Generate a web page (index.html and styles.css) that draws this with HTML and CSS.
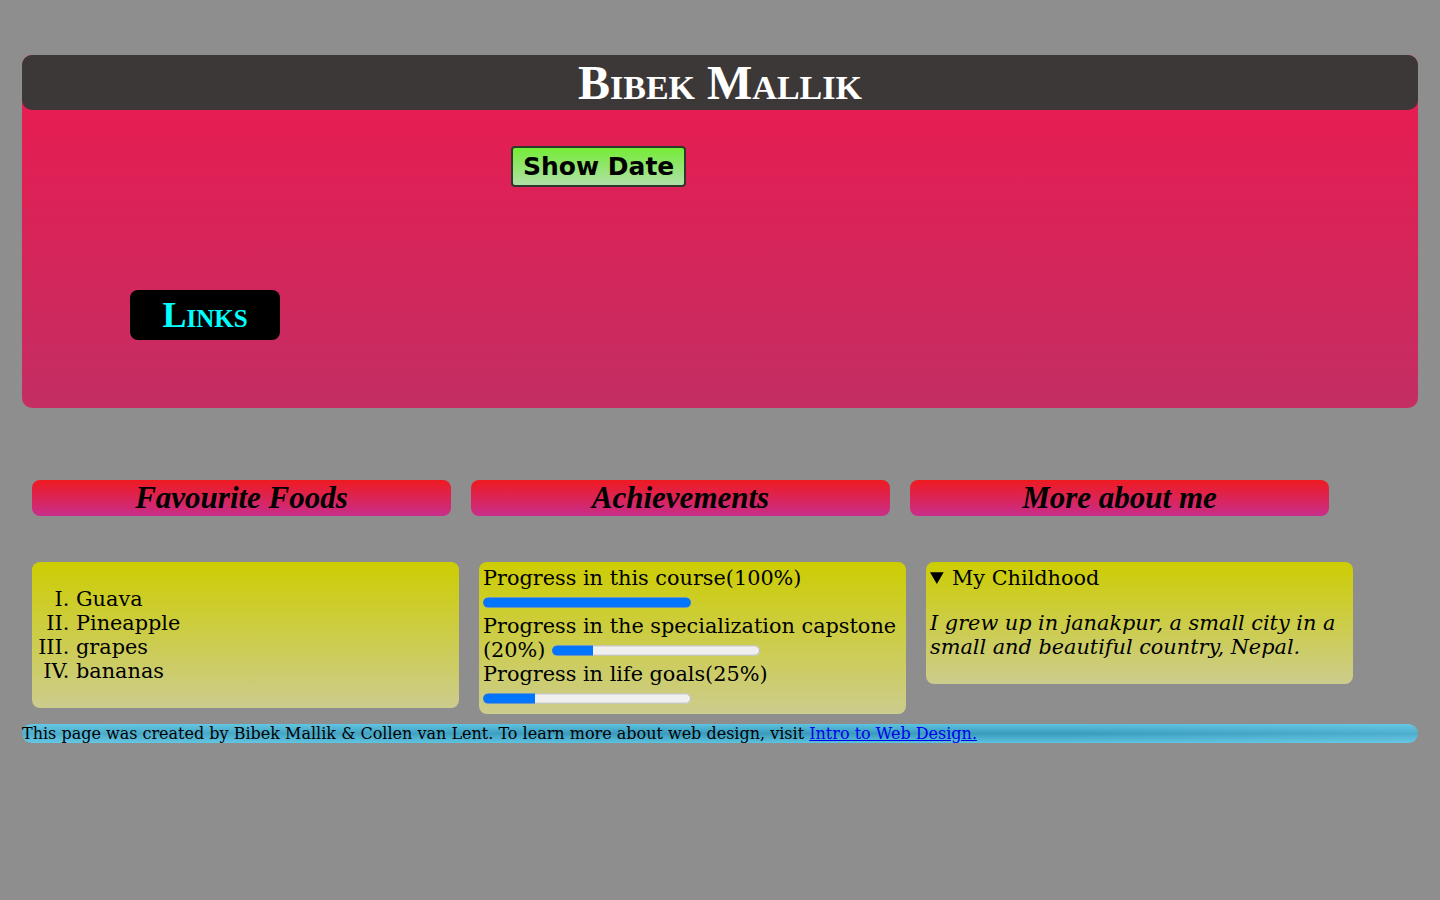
FILE: index.html
```html
<!DOCTYPE html>
<html lang="en">
<head>
<meta charset="utf-8">
<title>Bibek Mallik</title>
<link rel="stylesheet" href="styles.css">
</head>
<body>
<div class="page">
  <header class="hero">
    <h1 class="title">Bibek Mallik</h1>
    <div class="date-row">
      <button class="date-btn" type="button">Show Date</button>
    </div>
    <nav class="nav">
      <div class="links">Links</div>
    </nav>
  </header>

  <main class="sections">
    <div class="heads">
      <h2 class="head">Favourite Foods</h2>
      <h2 class="head">Achievements</h2>
      <h2 class="head">More about me</h2>
    </div>
    <div class="boxes">
      <div class="box">
        <ol class="foods">
          <li>Guava</li>
          <li>Pineapple</li>
          <li>grapes</li>
          <li>bananas</li>
        </ol>
      </div>
      <div class="box">
        <div class="goal">Progress in this course(100%) <progress value="100" max="100"></progress></div>
        <div class="goal">Progress in the specialization capstone (20%) <progress value="20" max="100"></progress></div>
        <div class="goal">Progress in life goals(25%) <progress value="25" max="100"></progress></div>
      </div>
      <div class="box">
        <details open>
          <summary>My Childhood</summary>
          <p class="story">I grew up in janakpur, a small city in a small and beautiful country, Nepal.</p>
        </details>
      </div>
    </div>
  </main>

  <footer class="footer">This page was created by Bibek Mallik &amp; Collen van Lent. To learn more about web design, visit <a href="#">Intro to Web Design.</a></footer>
</div>
</body>
</html>
```

FILE: styles.css
```css
html, body {
  margin: 0;
  padding: 0;
}

body {
  background: #8e8e8e;
  font-family: "DejaVu Serif", serif;
  font-size: 16px;
  color: #000;
}

.page {
  padding: 55px 22px 0;
}

.hero {
  height: 353px;
  border-radius: 10px;
  background: linear-gradient(to bottom, #ec1a4f 0%, #c32e63 100%);
}

.title {
  margin: 0;
  background: #3c3837;
  border-radius: 10px;
  color: #fff;
  text-align: center;
  font-family: "Liberation Serif", serif;
  font-variant: small-caps;
  font-weight: bold;
  font-size: 48px;
  line-height: 55px;
}

.date-row {
  padding: 36px 0 0 489px;
}

.date-btn {
  font-family: "DejaVu Sans", sans-serif;
  font-weight: bold;
  font-size: 25px;
  line-height: 29px;
  padding: 4px 10px;
  border: 2px solid #2d3a2a;
  border-radius: 4px;
  color: #000;
  background: linear-gradient(to bottom, #74ec35 0%, #b0e0a8 100%);
  margin: 0;
}

.nav {
  margin: 103px 0 0 108px;
}

.links {
  width: 150px;
  height: 50px;
  display: flex;
  align-items: center;
  justify-content: center;
  background: #000;
  border-radius: 8px;
  color: #00ffff;
  font-family: "Liberation Serif", serif;
  font-variant: small-caps;
  font-weight: bold;
  font-size: 36px;
}

.sections {
  margin-top: 72px;
  padding: 0 10px;
}

.heads {
  display: flex;
  gap: 20px;
}

.head {
  width: 419px;
  margin: 0;
  border-radius: 8px;
  background: linear-gradient(to bottom, #ef1a20 0%, #c72e8c 100%);
  text-align: center;
  font-family: "Liberation Serif", serif;
  font-style: italic;
  font-weight: bold;
  font-size: 31px;
  line-height: 36px;
}

.boxes {
  margin-top: 46px;
  display: flex;
  gap: 20px;
  align-items: flex-start;
}

.box {
  width: 419px;
  padding: 4px;
  border-radius: 8px;
  background: linear-gradient(to bottom, #cdcd03 0%, #cccc8e 100%);
  font-size: 20.8px;
  line-height: 24px;
}

.foods {
  list-style: upper-roman;
  margin: 20.8px 0;
  padding-left: 40px;
}

.goal progress {
  width: 208px;
}

.story {
  font-style: italic;
  margin: 20.8px 0;
}

.footer {
  margin-top: 10px;
  height: 19px;
  line-height: 19px;
  border-radius: 10px;
  background:
    linear-gradient(to right, rgba(120, 210, 235, 0.35) 0%, rgba(0, 0, 0, 0) 40%, rgba(0, 0, 0, 0) 75%, rgba(120, 210, 235, 0.35) 100%),
    linear-gradient(to bottom, #5cc3e0 0%, #3b9bbd 50%, #5cc3e0 100%);
  font-size: 16px;
  white-space: nowrap;
}

.footer a {
  color: #0000ee;
}
```
